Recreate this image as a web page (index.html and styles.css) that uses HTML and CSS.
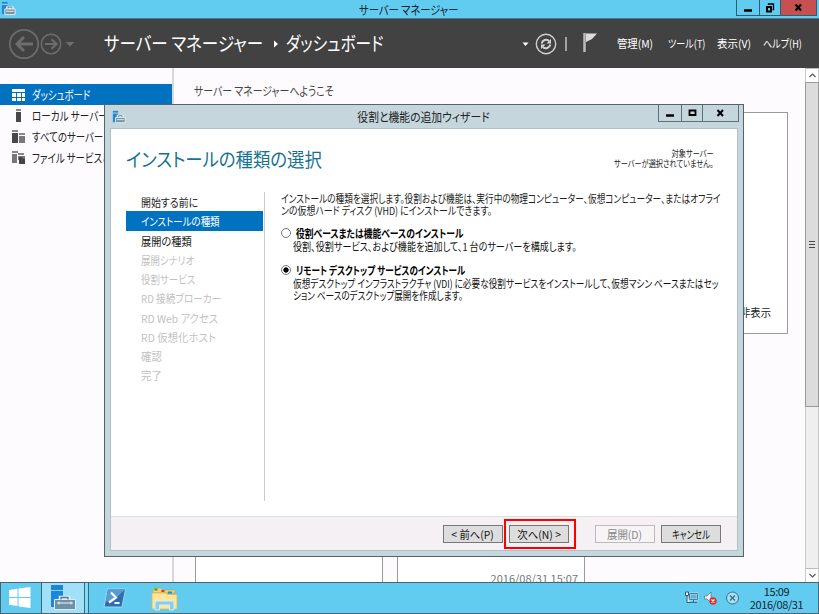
FILE: index.html
```html
<!DOCTYPE html>
<html lang="ja">
<head>
    <meta charset="utf-8">
    <title>サーバー マネージャー</title>
    <link rel="stylesheet" href="styles.css">
</head>
<body>
    <svg class="defs" width="0" height="0">
        <symbol id="server" viewBox="0 0 16 16">
            <path d="M1 1h6v13H1z" fill="#1e88d8"/>
            <path d="M1 3h6v1H1z" fill="#bfe3f7"/>
            <path d="M7 9V7h5v2" fill="none" stroke="#e8f0f4" stroke-width="3"/>
            <path d="M4 8.5h11v6H4z" fill="#7795a6" stroke="#e8f0f4"/>
            <path d="M7.500 8V6.500h4V8" fill="none" stroke="#607d8e"/>
            <path d="M5.500 11h8" stroke="#e8f0f4"/>
        </symbol>
    </svg>

    <div class="titlebar">
        <svg class="app-icon" width="15" height="15"><use href="#server"/></svg>
        <div class="title"><span class="t c w86">サーバー マネージャー</span></div>
        <div class="controls">
            <span class="ctl"><svg width="10" height="9"><path d="M1 7.500h8" stroke="#000" stroke-width="2.500"/></svg></span>
            <span class="ctl restore"><svg width="10" height="10"><path d="M3.500 2V1h5v5.500h-1" fill="none" stroke="#000" stroke-width="1.300"/><path d="M2 4h4v4.500H2z" fill="none" stroke="#000" stroke-width="2"/></svg></span>
            <span class="ctl close"><svg width="9" height="9"><path d="M1.500 1.500l5.500 6M7 1.500l-5.500 6" stroke="#000" stroke-width="2.200"/></svg></span>
        </div>
    </div>

    <div class="header">
        <svg class="nav" width="70" height="34" fill="none" stroke="#6d6d6d">
            <circle cx="16" cy="17" r="14.200" stroke-width="1.700"/>
            <path d="M25 17H9M16 10l-7 7 7 7" stroke-width="3"/>
            <circle cx="43" cy="17" r="9.700" stroke-width="1.500"/>
            <path d="M37 17h11M43.500 12.200l5 4.800-5 4.800" stroke-width="2.200"/>
            <path d="M57.500 15h9l-4.500 4.500z" fill="#6d6d6d" stroke="none"/>
        </svg>
        <div class="crumb crumb-1"><span class="t w87">サーバー マネージャー</span></div>
        <svg class="crumb-arrow" width="6" height="8"><path d="M1 0.500l4 3.500-4 3.500z" fill="#fff"/></svg>
        <div class="crumb crumb-2"><span class="t w83">ダッシュボード</span></div>
        <svg class="tools" width="80" height="34">
            <path d="M2.500 15.500h6l-3 3.500z" fill="#fff"/>
            <circle cx="26" cy="17" r="9.700" fill="none" stroke="#cfcfcf" stroke-width="1.400"/>
            <path d="M21.700 16.500a4.500 4.500 0 0 1 7.500-2.500M30.300 17.500a4.500 4.500 0 0 1-7.500 2.500" fill="none" stroke="#d5d5d5" stroke-width="1.900"/>
            <path d="M31 12v4.500h-4.500zM21 22v-4.500h4.500z" fill="#d5d5d5"/>
            <path d="M46 10v14" stroke="#bdbdbd" stroke-width="1.600"/>
            <path d="M64.500 6v19" stroke="#bbb" stroke-width="2.500"/>
            <path d="M66 6.500h11l-5 5.500-6 3z" fill="#dcdcdc"/>
        </svg>
        <div class="menu">
            <div class="menu-item m1"><span class="t w94">管理(M)</span></div>
            <div class="menu-item m2"><span class="t w83">ツール(T)</span></div>
            <div class="menu-item m3"><span class="t w95">表示(V)</span></div>
            <div class="menu-item m4"><span class="t w83">ヘルプ(H)</span></div>
        </div>
    </div>

    <div class="main">
        <div class="sidebar">
            <div class="side-item active">
                <svg width="14" height="14" fill="#fff"><path d="M0 1h13v3H0zM0 5h4v4H0zM5 5h4v4H5zM10 5h3v4h-3zM0 10h4v3H0zM5 10h4v3H5zM10 10h3v3h-3z"/></svg>
                <span class="t w78">ダッシュボード</span>
            </div>
            <div class="side-item">
                <svg width="14" height="14"><path d="M4 0h5v2H4z" fill="#888"/><path d="M4 3h5v10H4z" fill="#484848"/></svg>
                <span class="t w80">ローカル サーバー</span>
            </div>
            <div class="side-item">
                <svg width="14" height="14"><path d="M0 0h6v2H0zM7 3h6v2H7z" fill="#888"/><path d="M0 3h6v10H0z" fill="#484848"/><path d="M7 6h6v7H7z" fill="#777"/></svg>
                <span class="t w79">すべてのサーバー</span>
            </div>
            <div class="side-item">
                <svg width="14" height="14"><path d="M0 0h6v2H0zM6 2h6v2H6z" fill="#888"/><path d="M0 3h5v9H0z" fill="#777"/><path d="M6 5h7v4H6z" fill="#777"/><path d="M7 6h3l1 1.500h2V13H7z" fill="#444"/></svg>
                <span class="t w79">ファイル サービスと記憶域サービス</span>
            </div>
        </div>
        <div class="content">
            <div class="welcome"><span class="t w83">サーバー マネージャーへようこそ</span></div>
            <div class="panel"><span class="t r w94">非表示</span></div>
            <div class="tiles">
                <div class="tile"></div>
                <div class="tile">2016/08/31 15:07</div>
            </div>
        </div>
        <div class="scrollbar">
            <div class="sb-btn"><svg width="7" height="5"><path d="M0.500 4l3-3 3 3" fill="none" stroke="#555" stroke-width="1.200"/></svg></div>
            <div class="thumb"><i></i><i></i><i></i></div>
            <div class="sb-btn down"><svg width="7" height="5"><path d="M0.500 1l3 3 3-3" fill="none" stroke="#555" stroke-width="1.200"/></svg></div>
        </div>
    </div>

    <div class="taskbar">
        <div class="start">
            <svg width="22" height="21" fill="#fff"><path d="M0 3l8.500-1.300V10H0zM9.500 1.500L21.500 0v10h-12zM0 11h8.500v8L0 17.800zM9.500 11h12v10l-12-1.600z"/></svg>
        </div>
        <div class="task active">
            <svg width="26" height="26">
                <path d="M1 1h12v22H1z" fill="#1b86dc"/>
                <path d="M1 6.500h12" stroke="#8fd0f5"/>
                <path d="M10.500 16V13.500h8V16" fill="none" stroke="#d9eef7" stroke-width="3.500"/>
                <path d="M4.500 15.500h21v10h-21z" fill="#6f8fa3" stroke="#d9eef7"/>
                <path d="M11 15.500v-2h7v2" fill="none" stroke="#5c7a8c" stroke-width="1.300"/>
                <path d="M7 19h16M9 17.500v3M21 17.500v3" stroke="#e8f4fa"/>
            </svg>
        </div>
        <div class="task-stack"></div>
        <div class="task ps">
            <svg width="24" height="20">
                <path d="M4.500 1h18l-3.500 18H1z" fill="#2b6fae" stroke="#a5d5f0"/>
                <path d="M5 1.500h17L12 11 2.500 14z" fill="#5a9bd0"/>
                <path d="M8 4.500l5 5-7 5" fill="none" stroke="#fff" stroke-width="2.200"/>
                <path d="M11.500 15h5" stroke="#fff" stroke-width="2"/>
            </svg>
        </div>
        <div class="task explorer">
            <svg width="27" height="26">
                <path d="M2 3l1-2h7l1 2h13v3H2z" fill="#f0d27a" stroke="#c9a548" stroke-width=".7"/>
                <path d="M3.500 2.500h3" stroke="#2ea043" stroke-width="2"/>
                <path d="M10.500 4h3" stroke="#d33" stroke-width="2"/>
                <path d="M17 5.500h4" stroke="#2b8ad6" stroke-width="2"/>
                <path d="M1 6h14l2 1.500h9V22H1z" fill="#fbe69b" stroke="#d8b75a" stroke-width=".8"/>
                <path d="M4 23v-7q0-2 2-2h15q2 0 2 2v7h-4.500v-5h-10v5z" fill="#8ccdec" stroke="#d3eefa"/>
            </svg>
        </div>
        <div class="tray">
            <svg width="56" height="16">
                <path d="M5.500 3.500h8v6h-8z" fill="#5bb7e0" stroke="#fff" stroke-width="1.500"/>
                <path d="M5.500 3.500h8v6h-8zM6 12.500h7M9.500 10v2" fill="none" stroke="#33586b" stroke-width=".8"/>
                <path d="M1.500 2h3v3.500h-3zM3 5.500v7h3" fill="#e8f4fa" stroke="#33586b"/>
                <path d="M20.500 6h2.500l4-4v11l-4-4h-2.500z" fill="#eef6fa" stroke="#5b7c8c" stroke-width=".8"/>
                <circle cx="29" cy="11" r="3.700" fill="#dd2f2f"/>
                <path d="M27.500 9.500l3 3M30.500 9.500l-3 3" stroke="#fff" stroke-width="1.200"/>
                <circle cx="48.500" cy="8" r="6" fill="#a5e0f5" stroke="#38718a"/>
                <path d="M46 5.500l5 5M51 5.500l-5 5" stroke="#38718a" stroke-width="1.400"/>
            </svg>
        </div>
        <div class="clock">
            <div>15:09</div>
            <div>2016/08/31</div>
        </div>
    </div>

    <div class="dialog">
        <div class="dlg-title">
            <svg class="dlg-icon" width="14" height="14"><use href="#server"/></svg>
            <div class="title"><span class="t c w90">役割と機能の追加ウィザード</span></div>
            <div class="dlg-controls">
                <span><svg width="10" height="9"><path d="M1 6.500h8" stroke="#000" stroke-width="2.500"/></svg></span>
                <span><svg width="9" height="8"><path d="M1.500 1.500h6v4.500h-6z" fill="none" stroke="#000" stroke-width="1.800"/></svg></span>
                <span><svg width="9" height="8"><path d="M1.500 1l5.500 6M7 1l-5.500 6" stroke="#000" stroke-width="2"/></svg></span>
            </div>
        </div>
        <div class="dlg-body">
            <div class="dlg-head">
                <h1><span class="t w92">インストールの種類の選択</span></h1>
                <div class="target">
                    <div><span class="t r w80">対象サーバー</span></div>
                    <div><span class="t r w80">サーバーが選択されていません。</span></div>
                </div>
            </div>
            <div class="dlg-main">
                <ul class="steps">
                    <li class="done"><span class="t w90">開始する前に</span></li>
                    <li class="current"><span class="t w86">インストールの種類</span></li>
                    <li class="done"><span class="t w93">展開の種類</span></li>
                    <li><span class="t w86">展開シナリオ</span></li>
                    <li><span class="t w86">役割サービス</span></li>
                    <li><span class="t w88">RD 接続ブローカー</span></li>
                    <li><span class="t w94">RD Web アクセス</span></li>
                    <li><span class="t w95">RD 仮想化ホスト</span></li>
                    <li><span class="t w95">確認</span></li>
                    <li><span class="t w95">完了</span></li>
                </ul>
                <div class="form">
                    <p><span class="t w79">インストールの種類を選択します。役割および機能は、実行中の物理コンピューター、仮想コンピューター、またはオフライ</span></p>
                    <p><span class="t w81">ンの仮想ハード ディスク (VHD) にインストールできます。</span></p>
                    <div class="option">
                        <i class="radio"></i>
                        <b><span class="t w80">役割ベースまたは機能ベースのインストール</span></b>
                    </div>
                    <div class="desc">
                        <p><span class="t w83">役割、役割サービス、および機能を追加して、1 台のサーバーを構成します。</span></p>
                    </div>
                    <div class="option second">
                        <i class="radio checked"></i>
                        <b><span class="t w78">リモート デスクトップ サービスのインストール</span></b>
                    </div>
                    <div class="desc">
                        <p><span class="t w79">仮想デスクトップ インフラストラクチャ (VDI) に必要な役割サービスをインストールして、仮想マシン ベースまたはセッ</span></p>
                        <p><span class="t w78">ション ベースのデスクトップ展開を作成します。</span></p>
                    </div>
                </div>
            </div>
            <div class="dlg-foot">
                <button><span class="t c w94">&lt; 前へ(P)</span></button>
                <div class="mark"><button><span class="t c w95">次へ(N) &gt;</span></button></div>
                <button class="off" disabled><span class="t c w95">展開(D)</span></button>
                <button class="cancel"><span class="t c w76">キャンセル</span></button>
            </div>
        </div>
    </div>
</body>
</html>
```
FILE: styles.css
```css
* {
    box-sizing: border-box;
}

body {
    margin: 0;
    width: 819px;
    height: 614px;
    overflow: hidden;
    display: flex;
    flex-direction: column;
    position: relative;
    background: #fefbff;
    font-family: "Noto Sans CJK JP", "Noto Sans", sans-serif;
    font-feature-settings: "palt";
    font-size: 11px;
    color: #222;
}

svg {
    display: block;
    flex: none;
}

.defs {
    position: absolute;
}

/* condensed labels */
.t {
    display: inline-block;
    white-space: nowrap;
    transform-origin: left center;
}
.t.c { transform-origin: center; }
.t.r { transform-origin: right center; }
.w76 { transform: scaleX(.76); }
.w78 { transform: scaleX(.78); }
.w79 { transform: scaleX(.786); }
.w80 { transform: scaleX(.8); }
.w81 { transform: scaleX(.81); }
.w83 { transform: scaleX(.826); }
.w86 { transform: scaleX(.86); }
.w87 { transform: scaleX(.87); }
.w88 { transform: scaleX(.88); }
.w90 { transform: scaleX(.9); }
.w92 { transform: scaleX(.915); }
.w93 { transform: scaleX(.93); }
.w94 { transform: scaleX(.94); }
.w95 { transform: scaleX(.95); }

/* main window title bar */
.titlebar {
    height: 19px;
    flex: none;
    display: flex;
    background: #62cbf0;
    border-bottom: 1px solid #417d96;
}

.app-icon {
    margin: 1px 0 0 1px;
}

.titlebar .title {
    flex: 1;
    padding-left: 65px;
    text-align: center;
    font-size: 12px;
    line-height: 19px;
    color: #10242c;
}

.controls {
    display: flex;
    height: 16px;
    width: 81px;
    margin-right: 2px;
    border: 1px solid #2d5d70;
    border-top: none;
}

.ctl {
    width: 22px;
    display: flex;
    align-items: center;
    justify-content: center;
}

.ctl.restore {
    width: 21px;
    border-left: 1px solid #2d5d70;
}

.ctl.close {
    flex: 1;
    background: #c75050;
    border-left: 1px solid #2d5d70;
}

/* dark header */
.header {
    height: 49px;
    flex: none;
    display: flex;
    align-items: center;
    background: #424242;
    color: #fff;
    padding-left: 8px;
}

.crumb {
    font-size: 19px;
    line-height: 28px;
    padding-bottom: 1px;
    white-space: nowrap;
}

.crumb-1 {
    margin-left: 26px;
    width: 169px;
}

.crumb-2 {
    margin-left: 7px;
    width: 234px;
}

.tools {
    margin-right: 17px;
}

.menu {
    display: flex;
    line-height: 16px;
    padding-bottom: 1px;
}

.m1 { width: 51px; }
.m2 { width: 49px; }
.m3 { width: 46px; }
.m4 { width: 50px; }

/* body */
.main {
    flex: 1;
    min-height: 0;
    display: flex;
}

.sidebar {
    width: 174px;
    flex: none;
    border-right: 2px solid #d9d7da;
    padding-top: 16px;
}

.side-item {
    height: 21px;
    display: flex;
    align-items: center;
    gap: 6px;
    padding-left: 12px;
    font-size: 12px;
    line-height: 20px;
    overflow: hidden;
}

.side-item.active {
    background: #0072c0;
    color: #fff;
}

.content {
    flex: 1;
    min-width: 0;
    display: flex;
    flex-direction: column;
    padding-left: 21px;
}

.welcome {
    height: 44px;
    padding-top: 13px;
    line-height: 20px;
    font-size: 12px;
    color: #444;
    margin-left: -1px;
}

.panel {
    width: 593px;
    height: 222px;
    flex: none;
    background: #fff;
    border: 1px solid #9a9a9a;
    text-align: right;
    padding: 191px 16px 0 0;
    line-height: 16px;
}

.tiles {
    display: flex;
    gap: 14px;
    margin-top: 20px;
    flex: 1;
    overflow: hidden;
}

.tile {
    width: 188px;
    background: #fff;
    border: 1px solid #9a9a9a;
    border-bottom: none;
    text-align: right;
    padding: 215px 6px 0 0;
    line-height: 16px;
    color: #777;
}

.scrollbar {
    width: 14px;
    flex: none;
    display: flex;
    flex-direction: column;
    background: #f0eff0;
    border-left: 1px solid #c9c9c9;
    border-right: 1px solid #c9c9c9;
}

.sb-btn {
    height: 14px;
    background: #fff;
    display: flex;
    align-items: center;
    justify-content: center;
    border-top: 1px solid #bbb;
}

.sb-btn.down {
    margin-top: auto;
}

.thumb {
    height: 325px;
    margin: 0 -1px;
    background: #dcdcdc;
    border: 1px solid #999;
    display: flex;
    flex-direction: column;
    align-items: center;
    justify-content: center;
    gap: 1px;
}

.thumb i {
    width: 6px;
    height: 2px;
    border-top: 1px solid #444;
}

/* taskbar */
.taskbar {
    height: 32px;
    flex: none;
    display: flex;
    background: #62cbf0;
    border: 1px solid #4b6570;
}

.start {
    width: 40px;
    padding: 4px 0 0 8px;
}

.task.active {
    width: 44px;
    background: #a2e0f8;
    border-left: 1px solid #35687c;
    border-right: 1px solid #35687c;
    padding: 1px 0 0 8px;
}

.task-stack {
    width: 4px;
    background: #86d8f5;
    border-right: 1px solid #35687c;
}

.ps {
    padding: 5px 0 0 14px;
    width: 61px;
}

.explorer {
    padding: 4px 0 0 1px;
}

.tray {
    margin-left: auto;
    padding-top: 7px;
}

.clock {
    width: 78px;
    text-align: center;
    line-height: 13px;
    padding: 2px 5px 0 0;
    color: #102530;
    letter-spacing: -.4px;
}

/* wizard window */
.dialog {
    position: absolute;
    left: 104px;
    top: 104px;
    width: 640px;
    height: 453px;
    display: flex;
    flex-direction: column;
    background: #c5d6dd;
    border: 1px solid #53656c;
    padding: 0 5px 5px;
}

.dlg-title {
    height: 23px;
    flex: none;
    display: flex;
    align-items: flex-start;
}

.dlg-icon {
    margin: 5px 0 0 2px;
}

.dlg-title .title {
    flex: 1;
    padding-left: 63px;
    text-align: center;
    font-size: 12px;
    line-height: 24px;
}

.dlg-controls {
    display: flex;
    height: 17px;
    margin-right: -1px;
    border: 1px solid #5f7077;
    border-top: none;
}

.dlg-controls span {
    width: 22px;
    display: flex;
    align-items: center;
    justify-content: center;
}

.dlg-controls span + span {
    width: 21px;
    border-left: 1px solid #5f7077;
}

.dlg-controls span:last-child {
    width: 36px;
}

.dlg-body {
    flex: 1;
    display: flex;
    flex-direction: column;
    background: #fff;
    border: 1px solid #b3bfc4;
}

.dlg-head {
    height: 63px;
    display: flex;
    justify-content: space-between;
    padding: 16px 23px 0 15px;
}

h1 {
    margin: 0;
    font-size: 19px;
    line-height: 28px;
    font-weight: 400;
    color: #177291;
}

.target {
    text-align: right;
    font-size: 9px;
    line-height: 10px;
    padding-top: 4px;
}

.dlg-main {
    flex: 1;
    display: flex;
}

.steps {
    list-style: none;
    margin: 0;
    padding: 0 1px 0 15px;
    width: 154px;
    height: 309px;
    flex: none;
    border-right: 1px solid #ccc;
}

.steps li {
    height: 19.250px;
    line-height: 20px;
    padding-left: 15px;
    color: #c2c2c2;
}

.steps .done {
    color: #222;
}

.steps .current {
    background: #0072c0;
    color: #fff;
}

.form {
    padding-left: 16px;
}

.form p {
    margin: 0;
    line-height: 12px;
    height: 12px;
}

.option {
    display: flex;
    align-items: center;
    height: 14px;
    line-height: 14px;
    margin-top: 10px;
    gap: 5px;
    color: #000;
}

.option.second {
    margin-top: 11px;
}

.radio {
    width: 10px;
    height: 10px;
    border: 1px solid #777;
    border-radius: 50%;
    background: #fff;
}

.radio.checked {
    background: radial-gradient(#000 0 2.300px, #fff 3px);
}

.desc {
    padding-left: 12px;
    color: #111;
}

.dlg-foot {
    height: 34px;
    display: flex;
    align-items: flex-start;
    justify-content: flex-end;
    background: #f4f0f4;
    border-top: 1px solid #e2dfe3;
    padding: 8px 16px 0 0;
}

button {
    width: 60px;
    height: 18px;
    padding: 0;
    border: 1px solid #777;
    background: #ddd;
    font: inherit;
    font-feature-settings: inherit;
    line-height: 16px;
    color: #111;
}

button.off {
    background: #f6f4f6;
    border-color: #bbb;
    color: #888;
    margin-left: 19px;
}

button.cancel {
    margin-left: 6px;
}

.mark {
    width: 72px;
    height: 30px;
    margin: -6px 0 0 1px;
    padding: 4px 3px 0 3px;
    border: 2px solid #f00;
}
```
